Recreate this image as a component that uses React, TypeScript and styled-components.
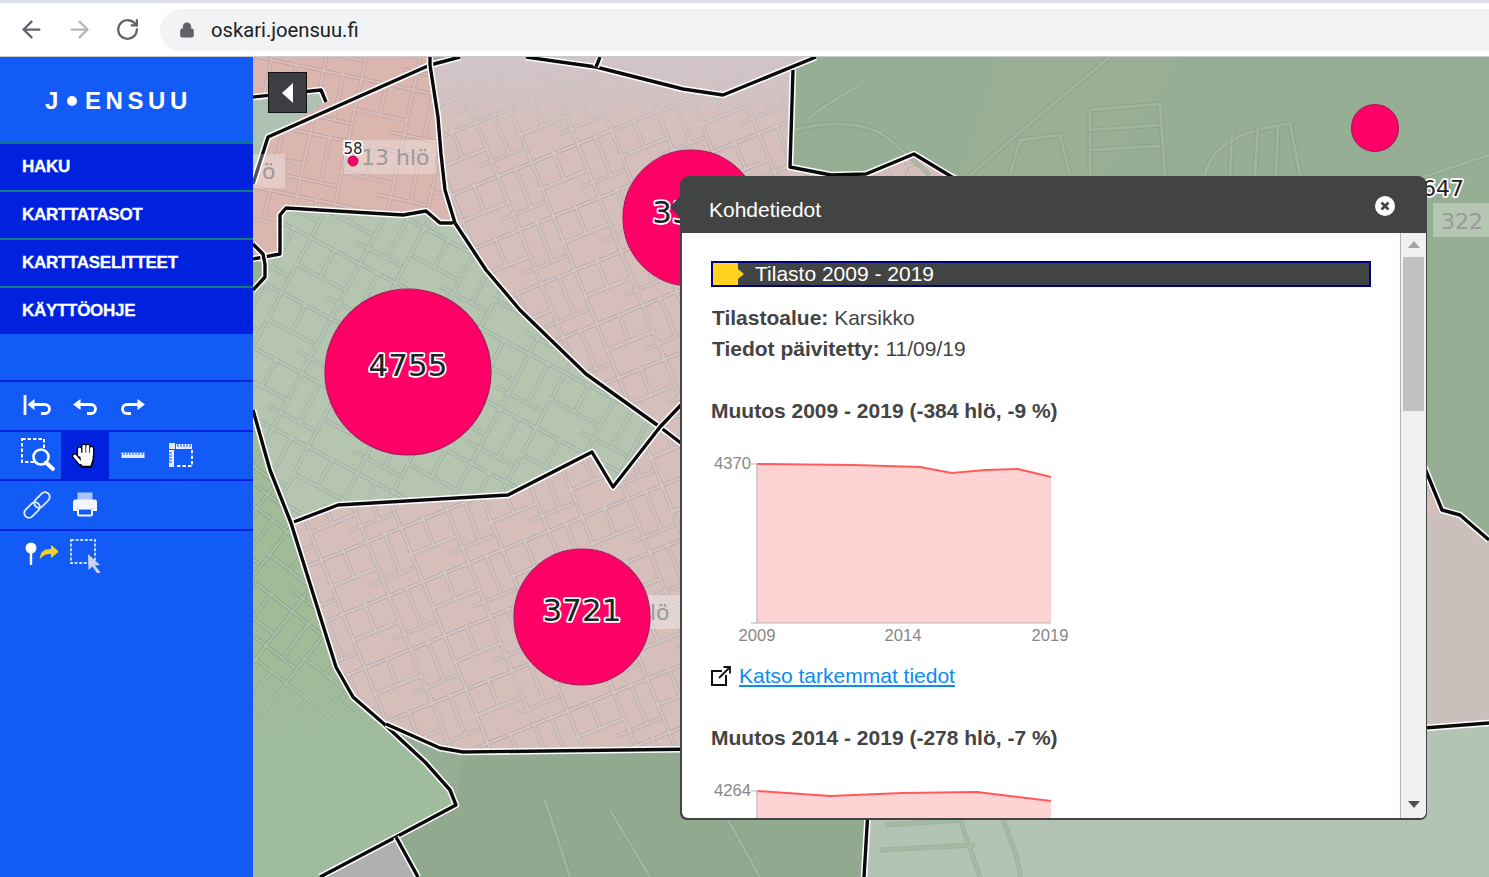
import React from "react";
import styled, { createGlobalStyle } from "styled-components";
import { ArrowLeft, ArrowRight, RotateCw, Lock } from "lucide-react";

const Global = createGlobalStyle`
  html, body { margin: 0; padding: 0; height: 100%; overflow: hidden; background: #fff; }
  #root { height: 100%; }
  * { box-sizing: border-box; }
`;

const Page = styled.div`
  width: 1489px; height: 877px; display: flex; flex-direction: column; overflow: hidden;
  font-family: "Liberation Sans", Arial, sans-serif;
`;
const BrowserBar = styled.header`
  height: 57px; flex: none; display: flex; align-items: center; background: #fff;
  border-top: 3px solid #dee1e6; border-bottom: 1px solid #c9cbcd; padding-left: 7px;
`;
const NavButton = styled.div<{ $dim?: boolean }>`
  width: 48px; height: 48px; display: flex; align-items: center; justify-content: center;
  color: ${(p) => (p.$dim ? "#b4b6b9" : "#5f6368")};
`;
const UrlPill = styled.div`
  margin-left: 9px; flex: 1; height: 42px; background: #f1f3f4; border-radius: 21px 0 0 21px;
  display: flex; align-items: center; padding-left: 19px; color: #5f6368;
`;
const UrlText = styled.span`
  margin-left: 16px; font: 20.2px Roboto, sans-serif; color: #202124;
`;
const Main = styled.main`
  flex: 1; display: flex; min-height: 0;
`;
const Sidebar = styled.nav`
  width: 253px; flex: none; background: #135bf6; display: flex; flex-direction: column;
`;
const Logo = styled.div`
  height: 85px; display: flex; align-items: center; padding: 2px 0 0 45px; color: #fff;
  font: 700 24px "Liberation Sans", sans-serif; letter-spacing: 4.6px;
`;
const LogoDot = styled.span`
  width: 10px; height: 10px; border-radius: 50%; background: #fff; margin: 0 8px 0 4px;
`;
const MenuItem = styled.div`
  height: 48px; background: #0021dd; border-top: 2px solid #0a7a83; display: flex; align-items: center;
  padding-left: 22px; color: #fff; font: 700 17px "Liberation Sans", sans-serif; letter-spacing: -0.3px;
  -webkit-text-stroke: 0.3px #fff;
  &:last-of-type { height: 50px; border-bottom: 2px solid #0a2ae0; }
`;
const ToolsBlock = styled.div`
  margin-top: 46px;
`;
const ToolRow = styled.div`
  height: 49.5px; display: flex; padding-left: 13px; border-top: 2px solid #0021dd;
`;
const ToolButton = styled.div<{ $active?: boolean }>`
  width: 48px; height: 47.5px; display: flex; align-items: center; justify-content: center;
  background: ${(p) => (p.$active ? "#0021dd" : "transparent")};
`;
const MapArea = styled.div`
  position: relative; flex: 1; overflow: hidden; background: #96ae93;
`;
const MapCanvas = styled.svg`
  display: block; width: 1236px; height: 820px;
`;
const BackButton = styled.div`
  position: absolute; left: 15px; top: 15px; width: 39px; height: 41px; background: #3d3e42;
  border: 1px solid #111; display: flex; align-items: center; justify-content: center;
`;
const BackArrow = styled.div`
  width: 0; height: 0; border-top: 10px solid transparent; border-bottom: 10px solid transparent;
  border-right: 11px solid #fff;
`;
const Popup = styled.section`
  position: absolute; left: 427px; top: 119px; width: 747px; height: 644px; display: flex; flex-direction: column;
  border-radius: 9px 9px 7px 7px; background: #424443; padding: 0 1px 2px 2px;
  &::before {
    content: ""; position: absolute; left: -10px; top: 20px; border-top: 11px solid transparent;
    border-bottom: 11px solid transparent; border-right: 10px solid #424443;
  }
`;
const PopupHeader = styled.div`
  height: 57px; flex: none; display: flex; align-items: center; justify-content: space-between;
  padding: 10px 31px 0 27px; color: #fff; font-size: 21px;
`;
const CloseButton = styled.div`
  width: 20px; height: 20px; margin-top: -8px; border-radius: 50%; background: #fff; display: flex;
  align-items: center; justify-content: center;
`;
const PopupBody = styled.div`
  flex: 1; display: flex; min-height: 0; background: #fff; border-radius: 0 0 6px 6px; overflow: hidden;
`;
const Content = styled.div`
  flex: 1; overflow: hidden; padding: 28px 29px 0 29px; color: #444;
`;
const SectionBar = styled.div`
  height: 26px; display: flex; align-items: center; background: #424443; border: 2px solid #000080;
  color: #fff; font-size: 21px; padding-left: 42px; position: relative;
  &::before { content: ""; position: absolute; left: 0; top: 0; bottom: 0; width: 25px; background: #ffd21f; }
  &::after {
    content: ""; position: absolute; left: 25px; top: 6px; border-top: 5px solid transparent;
    border-bottom: 5px solid transparent; border-left: 6px solid #ffd21f;
  }
`;
const InfoBlock = styled.div`
  margin-top: 15px; font-size: 21px; line-height: 31px; padding-left: 1px;
`;
const InfoLabel = styled.b`
  font-weight: 700;
`;
const ChartHeading = styled.h3<{ $gap: number }>`
  margin: ${(p) => p.$gap}px 0 27px; font-size: 21px; line-height: 24px; font-weight: 700; color: #444;
`;
const Chart = styled.svg`
  display: block; width: 370px; height: 200px; font-family: "Liberation Sans", sans-serif;
`;
const LinkRow = styled.div`
  margin-top: 12px; height: 28px; display: flex; align-items: center; gap: 8px;
`;
const DetailLink = styled.a`
  color: #0a8cf0; text-decoration: underline; font-size: 21px;
`;
const Scrollbar = styled.div`
  width: 26px; flex: none; background: #f1f1f1; border-left: 1px solid #a4bca0; display: flex; flex-direction: column;
  align-items: center; position: relative; padding: 0 1px 0 1px;
`;
const ArrowUp = styled.div`
  width: 0; height: 0; margin-top: 8px; border-left: 6px solid transparent; border-right: 6px solid transparent;
  border-bottom: 7px solid #a3a3a3;
`;
const Thumb = styled.div`
  width: 21px; height: 154px; margin-top: 9px; background: #c1c1c1;
`;
const ArrowDown = styled.div`
  width: 0; height: 0; margin-top: auto; margin-bottom: 10px; border-left: 6px solid transparent;
  border-right: 6px solid transparent; border-top: 7px solid #505050;
`;

type Pt = [number, number];
const pts = (a: Pt[]) => a.map((p) => p.join(",")).join(" ");

const pinkTop: Pt[] = [[268,137],[430,65],[438,117],[441,154],[445,190],[455,223],[440,223],[426,211],[403,215],[286,208],[280,215],[280,254],[253,259],[253,184]];
const corner: Pt[] = [[253,57],[430,57],[430,65],[268,137],[253,184]];
const cornerGreen: Pt[] = [[253,97],[321,90],[326,102],[268,137],[253,184]];
const centerGreen: Pt[] = [[286,208],[403,215],[426,211],[440,223],[455,223],[486,270],[520,310],[586,374],[660,427],[630,470],[613,487],[592,452],[508,495],[338,505],[291,523],[270,470],[253,410],[253,290],[265,277],[265,264],[253,259],[280,254],[280,215]];
const centerPink: Pt[] = [[430,65],[460,57],[816,57],[793,70],[790,167],[831,175],[866,174],[914,154],[957,175],[1000,230],[1425,470],[1442,510],[1460,515],[1489,540],[1489,723],[1427,728],[680,749],[463,752],[440,748],[386,724],[353,697],[336,667],[291,523],[338,505],[508,495],[592,452],[613,487],[660,427],[586,374],[520,310],[486,270],[455,223],[445,190],[441,154],[438,117]];
const lowGreen: Pt[] = [[253,410],[270,470],[291,523],[336,667],[353,697],[383,723],[426,763],[450,790],[456,805],[396,837],[320,877],[253,877]];
const rightPale: Pt[] = [[866,760],[1489,723],[1489,877],[864,877]];
const topFade: Pt[] = [[430,65],[460,57],[816,57],[793,70],[790,140],[438,140],[438,117]];

const boundaries: Pt[][] = [
  [[253,97],[321,90],[326,102]],
  [[460,57],[430,65],[268,137],[253,184]],
  [[430,57],[430,65],[438,117],[441,154],[445,190],[455,223],[440,223],[426,211],[403,215],[286,208],[280,215],[280,254],[253,259]],
  [[253,244],[263,254],[265,264],[265,277],[253,290]],
  [[455,223],[486,270],[520,310],[586,374],[660,427],[690,450]],
  [[526,57],[596,67],[683,89],[723,95],[816,57]],
  [[600,57],[596,67]],
  [[793,70],[790,167],[831,175],[866,174],[914,154],[957,180]],
  [[291,523],[338,505],[508,495],[592,452],[613,487],[660,427],[700,385]],
  [[253,410],[270,470],[291,523],[336,667],[353,697],[383,723],[426,763],[450,790],[456,805],[396,837],[320,877]],
  [[396,837],[418,877]],
  [[386,724],[440,748],[463,752],[700,749]],
  [[868,810],[864,877]],
  [[1424,466],[1442,510],[1460,515],[1489,540]],
  [[1424,728],[1489,723]],
];

const roads: string[] = [
  "M795 130 C830 120 870 122 890 140 L930 175",
  "M810 118 C830 100 850 92 860 85",
  "M970 175 L1040 115 L1110 57",
  "M1010 175 L1020 140 L1060 135 L1070 175",
  "M1090 175 L1090 110 L1160 104 L1165 175",
  "M1090 130 L1160 125 M1090 150 L1160 146",
  "M1205 175 C1210 150 1235 130 1290 124 L1300 175",
  "M1230 175 L1232 132 M1255 175 L1258 126 M1276 175 L1278 124",
  "M1489 155 L1340 205",
  "M885 825 L960 820 L980 877 M880 850 L975 845",
  "M1000 810 C1010 840 1020 860 1020 877",
  "M545 800 L570 877 M610 810 L650 877 M700 770 L760 877",
];

const City: React.FC<{ id: string; w: number; h: number; rot: number; block: string; casing: string; road: string }> = ({ id, w, h, rot, block, casing, road }) => {
  const lines = [
    `M0 2H${w}`, `M0 ${h * 0.52}H${w * 0.6}`, `M${w * 0.45} ${h * 0.75}H${w}`,
    `M2 0V${h}`, `M${w * 0.3} 0V${h * 0.52}`, `M${w * 0.6} 0V${h}`, `M${w * 0.82} 0V${h * 0.75}`,
  ].join(" ");
  return (
    <pattern id={id} width={w} height={h} patternUnits="userSpaceOnUse" patternTransform={`rotate(${rot})`}>
      <rect width={w} height={h} fill={block} />
      <path d={lines} fill="none" stroke={casing} strokeWidth="4" />
      <path d={lines} fill="none" stroke={road} strokeWidth="2.200" />
    </pattern>
  );
};

const Blocks: React.FC = () => (
  <defs>
    <City id="cityPink" w={86} h={58} rot={-22} block="#d6bfba" casing="#bca9a9" road="#d4c8c6" />
    <City id="cityRose" w={92} h={64} rot={12} block="#dab6ae" casing="#c4a2a2" road="#d9bebb" />
    <City id="cityGreen" w={96} h={62} rot={28} block="#b6c5b0" casing="#9db0a0" road="#b9c8ba" />
    <City id="cityLow" w={92} h={60} rot={38} block="#a1bb98" casing="#86a488" road="#a9c1a8" />
    <linearGradient id="fadeTop" gradientUnits="userSpaceOnUse" x1="0" y1="70" x2="0" y2="140">
      <stop offset="0" stopColor="#d1c4c7" stopOpacity="0.95" />
      <stop offset="1" stopColor="#d1c4c7" stopOpacity="0" />
    </linearGradient>
    <linearGradient id="fadeLow" gradientUnits="userSpaceOnUse" x1="0" y1="660" x2="0" y2="760">
      <stop offset="0" stopColor="#9fbc9f" stopOpacity="0" />
      <stop offset="1" stopColor="#9fbc9f" stopOpacity="1" />
    </linearGradient>
  </defs>
);

const ClusterLabel = styled.text<{ $size?: number }>`
  font-family: "DejaVu Sans", sans-serif; font-size: ${(p) => p.$size ?? 31}px; fill: #222; stroke: #fff; stroke-width: 3.5px;
  paint-order: stroke; stroke-linejoin: round; text-anchor: middle;
`;
const PlaceLabel = styled.text`
  font-family: "DejaVu Sans", sans-serif; font-size: 22px; fill: #9a9a9a;
`;

const MapDrawing: React.FC = () => (
  <MapCanvas viewBox="253 57 1236 820">
    <Blocks />
    <g style={{ filter: "blur(0.7px)" }}>
      <polygon points={pts(corner)} fill="url(#cityRose)" />
      <polygon points={pts(cornerGreen)} fill="#aec2b4" />
      <polygon points={pts(rightPale)} fill="#b4c4b4" />
      <polygon points="456,805 396,837 418,877 864,877 868,755 463,752" fill="#90a98f" />
      <polygon points={pts(pinkTop)} fill="url(#cityRose)" />
      <polygon points={pts(centerGreen)} fill="url(#cityGreen)" />
      <polygon points={pts(centerPink)} fill="url(#cityPink)" />
      <polygon points={pts(topFade)} fill="url(#fadeTop)" />
      <polygon points="1425,520 1442,510 1460,515 1489,540 1489,723 1425,728" fill="#cbbfbb" />
      <polygon points={pts(lowGreen)} fill="url(#cityLow)" />
      <polygon points={pts(lowGreen)} fill="url(#fadeLow)" />
      <polygon points="396,837 418,877 330,877" fill="#b0b0b2" />
      <polygon points="1000,57 1180,57 1100,180 960,180" fill="#9cb296" opacity="0.5" />
      {roads.map((d, i) => (
        <g key={i} fill="none">
          <path d={d} stroke="#7f8f7f" strokeOpacity="0.35" strokeWidth="5" />
          <path d={d} stroke="#a8bca4" strokeOpacity="0.7" strokeWidth="3" />
        </g>
      ))}
    </g>
    {boundaries.map((b, i) => (
      <g key={i} fill="none" strokeLinejoin="round">
        <polyline points={pts(b)} stroke="#fff" strokeWidth="6.500" />
        <polyline points={pts(b)} stroke="#0a0a0a" strokeWidth="3.400" />
      </g>
    ))}
    <rect x="344" y="140" width="92" height="34" fill="#fff" fillOpacity="0.3" />
    <rect x="253" y="154" width="32" height="34" fill="#fff" fillOpacity="0.3" />
    <rect x="640" y="595" width="40" height="34" fill="#fff" fillOpacity="0.35" />
    <rect x="1433" y="203" width="56" height="34" fill="#fff" fillOpacity="0.3" />
    <PlaceLabel x="361" y="165">13 hlö</PlaceLabel>
    <PlaceLabel x="262" y="179">ö</PlaceLabel>
    <PlaceLabel x="650" y="620">lö</PlaceLabel>
    <PlaceLabel x="1441" y="229">322</PlaceLabel>
    <circle cx="408" cy="372" r="83" fill="#ff0066" stroke="#a81a5c" strokeWidth="1.200" />
    <circle cx="582" cy="617" r="68" fill="#ff0066" stroke="#a81a5c" strokeWidth="1.200" />
    <circle cx="691" cy="218" r="68" fill="#ff0066" stroke="#a81a5c" strokeWidth="1.200" />
    <circle cx="1375" cy="128" r="23.500" fill="#ff0066" stroke="#a81a5c" strokeWidth="1.200" />
    <circle cx="353" cy="161" r="5" fill="#ff0066" stroke="#a81a5c" strokeWidth="1" />
    <ClusterLabel x="408" y="376">4755</ClusterLabel>
    <ClusterLabel x="582" y="621">3721</ClusterLabel>
    <ClusterLabel x="672" y="223">33</ClusterLabel>
    <ClusterLabel x="1443" y="196" $size={22}>647</ClusterLabel>
    <ClusterLabel x="353" y="154" $size={15}>58</ClusterLabel>
  </MapCanvas>
);

const ic = { fill: "none", stroke: "#fff", strokeWidth: 2.8 } as const;

const UndoFirstIcon = () => (
  <svg width="28" height="28" viewBox="0 0 28 28">
    <path d="M2 3v20" {...ic} />
    <path d="M4.500 12.500l7-5.500v11z" fill="#fff" />
    <path d="M10 12.500h12a4.500 4.500 0 0 1 0 9h-4" {...ic} />
  </svg>
);
const UndoIcon = () => (
  <svg width="28" height="28" viewBox="0 0 28 28">
    <path d="M2 12.500L9.500 7v11z" fill="#fff" />
    <path d="M8 12.500h12a4.500 4.500 0 0 1 0 9h-4" {...ic} />
  </svg>
);
const RedoIcon = () => (
  <svg width="28" height="28" viewBox="0 0 28 28">
    <path d="M26 12.500L18.500 7v11z" fill="#fff" />
    <path d="M20 12.500H8a4.500 4.500 0 0 0 0 9h4" {...ic} />
  </svg>
);
const ZoomBoxIcon = () => (
  <svg width="38" height="38" viewBox="0 0 38 38">
    <rect x="4" y="3" width="22" height="23" {...ic} strokeWidth="2" strokeDasharray="3.500 2" />
    <circle cx="23" cy="21" r="7.500" fill="#135bf6" stroke="#fff" strokeWidth="2.600" />
    <path d="M28 26.500l7 6.500" {...ic} strokeWidth="4" strokeLinecap="round" />
  </svg>
);
const HandShape: React.FC<{ c: string; w: number }> = ({ c, w }) => (
  <g fill="none" stroke={c} strokeWidth={w} strokeLinecap="round">
    <path d="M7 12V6.500M11 11V4M14.500 11V4M18 12V6" />
    <path d="M2.500 13l5 6" />
  </g>
);
const HandIcon = () => (
  <svg width="26" height="26" viewBox="0 0 24 24">
    <HandShape c="#000" w={5} />
    <path d="M4.500 13.500L8 18 7 10h12.500v6l-2 7H9z" fill="#000" stroke="#000" strokeWidth="2" />
    <HandShape c="#fff" w={2.800} />
    <path d="M5 14l3.500 4L7 10h12v6l-2 6H9.500z" fill="#fff" />
  </svg>
);
const RulerIcon = () => (
  <svg width="28" height="28" viewBox="0 0 28 28">
    <path d="M2.500 11.500h23V17h-23z" fill="#e6ecff" />
    <path d="M5 11v3M8 11v3M11 11v3M14 11v3M17 11v3M20 11v3M23 11v3" stroke="#135bf6" strokeWidth="1" />
  </svg>
);
const AreaIcon = () => (
  <svg width="28" height="28" viewBox="0 0 28 28">
    <rect x="2" y="2" width="6" height="6" fill="#e6ecff" />
    <path d="M9 3h16v5H9zM2 9h5v17H2z" fill="#e6ecff" />
    <path d="M11 3v3M14 3v3M17 3v3M20 3v3M23 3v3M2 12h3M2 15h3M2 18h3M2 21h3" stroke="#135bf6" strokeWidth="1" />
    <path d="M25 9v16H8" {...ic} strokeWidth="1.800" strokeDasharray="3.500 2" />
  </svg>
);
const LinkIcon = () => (
  <svg width="28" height="28" viewBox="0 0 28 28">
    <g {...ic} strokeWidth="1.800" stroke="#e6ecff">
      <rect x="-9" y="-4.750" width="18" height="9.500" rx="4.750" transform="translate(19 9) rotate(-45)" />
      <rect x="-9" y="-4.750" width="18" height="9.500" rx="4.750" transform="translate(9 19) rotate(-45)" />
    </g>
  </svg>
);
const PrinterIcon = () => (
  <svg width="28" height="28" viewBox="0 0 28 28">
    <path d="M6.500 1.500h15v8h-15z" fill="#a9c4fb" />
    <path d="M4 8.500h20a2.500 2.500 0 0 1 2 2.500V20h-4v-3H6v3H2v-9A2.500 2.500 0 0 1 4 8.500z" fill="#f4f7ff" />
    <rect x="7" y="17.500" width="14" height="7" rx="1.500" fill="none" stroke="#f4f7ff" strokeWidth="2" />
  </svg>
);
const PinMoveIcon = () => (
  <svg width="42" height="30" viewBox="0 0 42 30">
    <circle cx="15" cy="9" r="5.500" fill="#fff" />
    <path d="M15 13v13" stroke="#fff" strokeWidth="2.400" />
    <path d="M24 20c0-7 4-10 11-10V6l8 6.500-8 6.500v-4c-5 0-8 1-11 5z" fill="#f7cf1e" />
  </svg>
);
const SelectIcon = () => (
  <svg width="36" height="38" viewBox="0 0 36 38">
    <rect x="4" y="5" width="24" height="23" fill="none" stroke="#c9d6f5" strokeWidth="2" strokeDasharray="3 1.600" />
    <path d="M21 19l12 11-5 .5 5.500 7-3 1.500-5-7.500-4 3.500z" fill="#c9d4ee" />
  </svg>
);

type Series = { max: string; line: Pt[]; years?: boolean };
const AreaChart: React.FC<Series & { base: number }> = ({ max, line, base, years }) => {
  const top = line[0][1];
  return (
    <Chart viewBox="0 0 370 200">
      <polygon points={`46,${base} ${pts(line)} 340,${base}`} fill="#ffd3d3" />
      <polyline points={pts(line)} fill="none" stroke="#ff5a5a" strokeWidth="2" />
      <path d={`M46 ${top}V${base}`} stroke="#b5b5b5" strokeWidth="1.200" />
      <path d={`M40 ${top}h6M40 ${base}h300`} stroke="#b5b5b5" strokeWidth="1.200" />
      <text x="40" y={top + 5} textAnchor="end" fontSize="16.600" fill="#888">{max}</text>
      {years && (
        <>
          <text x="46" y={base + 18} textAnchor="middle" fontSize="16.600" fill="#888">2009</text>
          <text x="192" y={base + 18} textAnchor="middle" fontSize="16.600" fill="#888">2014</text>
          <text x="339" y={base + 18} textAnchor="middle" fontSize="16.600" fill="#888">2019</text>
        </>
      )}
    </Chart>
  );
};

const series1: Pt[] = [[46,14],[142,15],[209,17],[241,23],[274,20],[307,19],[340,27]];
const series2: Pt[] = [[46,14],[119,19],[192,16],[266,15],[340,24]];

export default function App() {
  return (
    <Page>
      <Global />
      <BrowserBar>
        <NavButton><ArrowLeft size={27} strokeWidth={2} /></NavButton>
        <NavButton $dim><ArrowRight size={27} strokeWidth={2} /></NavButton>
        <NavButton><RotateCw size={25} strokeWidth={2.200} /></NavButton>
        <UrlPill>
          <Lock size={16} fill="#5f6368" strokeWidth={2.500} />
          <UrlText>oskari.joensuu.fi</UrlText>
        </UrlPill>
      </BrowserBar>
      <Main>
        <Sidebar>
          <Logo>J<LogoDot />ENSUU</Logo>
          <MenuItem>HAKU</MenuItem>
          <MenuItem>KARTTATASOT</MenuItem>
          <MenuItem>KARTTASELITTEET</MenuItem>
          <MenuItem>KÄYTTÖOHJE</MenuItem>
          <ToolsBlock>
            <ToolRow>
              <ToolButton><UndoFirstIcon /></ToolButton>
              <ToolButton><UndoIcon /></ToolButton>
              <ToolButton><RedoIcon /></ToolButton>
            </ToolRow>
            <ToolRow>
              <ToolButton><ZoomBoxIcon /></ToolButton>
              <ToolButton $active><HandIcon /></ToolButton>
              <ToolButton><RulerIcon /></ToolButton>
              <ToolButton><AreaIcon /></ToolButton>
            </ToolRow>
            <ToolRow>
              <ToolButton><LinkIcon /></ToolButton>
              <ToolButton><PrinterIcon /></ToolButton>
            </ToolRow>
            <ToolRow>
              <ToolButton><PinMoveIcon /></ToolButton>
              <ToolButton><SelectIcon /></ToolButton>
            </ToolRow>
          </ToolsBlock>
        </Sidebar>
        <MapArea>
          <MapDrawing />
          <BackButton><BackArrow /></BackButton>
          <Popup>
            <PopupHeader>
              Kohdetiedot
              <CloseButton>
                <svg width="12" height="12" viewBox="0 0 12 12">
                  <path d="M2.500 2.500l7 7M9.500 2.500l-7 7" stroke="#424443" strokeWidth="2.600" />
                </svg>
              </CloseButton>
            </PopupHeader>
            <PopupBody>
              <Content>
                <SectionBar>Tilasto 2009 - 2019</SectionBar>
                <InfoBlock>
                  <div><InfoLabel>Tilastoalue:</InfoLabel> Karsikko</div>
                  <div><InfoLabel>Tiedot päivitetty:</InfoLabel> 11/09/19</div>
                </InfoBlock>
                <ChartHeading $gap={35}>Muutos 2009 - 2019 (-384 hlö, -9 %)</ChartHeading>
                <AreaChart max="4370" line={series1} base={173} years />
                <LinkRow>
                  <svg width="20" height="20" viewBox="0 0 20 20">
                    <path d="M11 5H1v14h14V9" fill="none" stroke="#111" strokeWidth="2" />
                    <path d="M8 12L19 1M12.500 1H19v6.500" fill="none" stroke="#111" strokeWidth="1.800" />
                  </svg>
                  <DetailLink href="#">Katso tarkemmat tiedot</DetailLink>
                </LinkRow>
                <ChartHeading $gap={36}>Muutos 2014 - 2019 (-278 hlö, -7 %)</ChartHeading>
                <AreaChart max="4264" line={series2} base={173} />
              </Content>
              <Scrollbar>
                <ArrowUp />
                <Thumb />
                <ArrowDown />
              </Scrollbar>
            </PopupBody>
          </Popup>
        </MapArea>
      </Main>
    </Page>
  );
}
